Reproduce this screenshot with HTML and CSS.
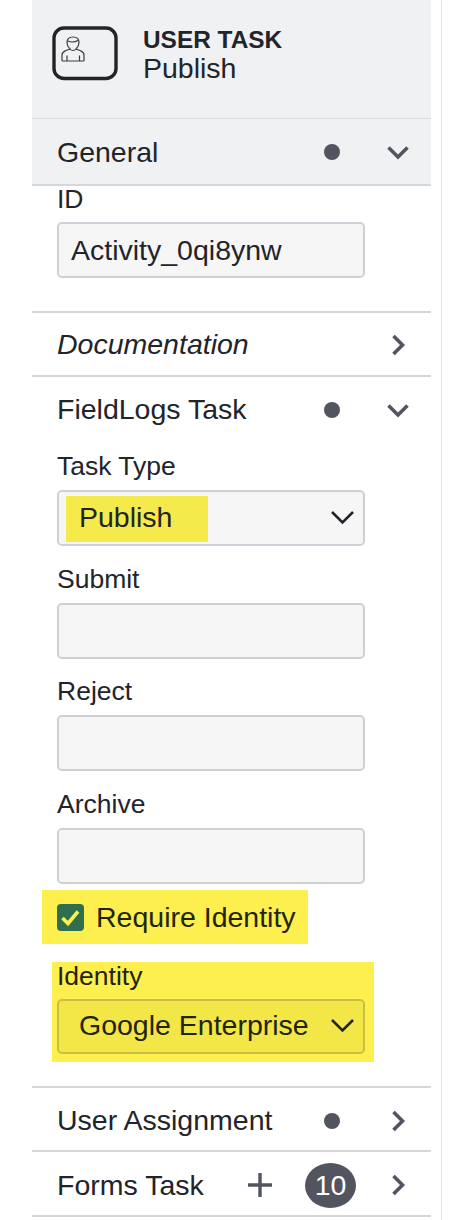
FILE: index.html
```html
<!DOCTYPE html>
<html lang="en">
<head>
    <meta charset="UTF-8">
    <meta name="viewport" content="width=device-width, initial-scale=1.0">
    <title>User Task properties</title>
    <link rel="stylesheet" href="styles.css">
</head>
<body>
    <div class="page">
        <div class="panel">
            <div class="panel-header">
                <svg class="task-icon" width="66" height="56" viewBox="0 0 66 56" fill="none">
                    <rect class="icon-frame" x="2" y="2" width="62" height="50.500" rx="10"/>
                    <path class="icon-person" d="M10 35H32M10 35V29C10 26 12 25.500 14 24.500L18 23C16 21 15 19 15 16.500C15 13 17.500 11 21 11C24.500 11 27 13 27 16.500C27 19 26 21 24 23L28 24.500C30 25.500 32 26 32 29V35M15 29.500V35M27.500 29.500V35M18 23C19.500 25 22.500 25 24 23M16 15C19 16.500 23 16 26 14.500"/>
                </svg>
                <div class="header-text">
                    <div class="task-kind">USER TASK</div>
                    <div class="task-name">Publish</div>
                </div>
            </div>

            <div class="group-head open-head">
                <span class="group-title">General</span>
                <span class="dot"></span>
                <svg class="arrow" width="26" height="26" viewBox="0 0 26 26"><path d="M3.500 8.500L13 18L22.500 8.500"/></svg>
            </div>
            <div class="group-body general-body">
                <label class="field-label id-label">ID</label>
                <div class="input">Activity_0qi8ynw</div>
            </div>

            <div class="group-head doc-head">
                <span class="group-title doc-title">Documentation</span>
                <svg class="arrow" width="26" height="26" viewBox="0 0 26 26"><path d="M8.500 4L17.500 13L8.500 22"/></svg>
            </div>

            <div class="group-head no-border">
                <span class="group-title">FieldLogs Task</span>
                <span class="dot"></span>
                <svg class="arrow" width="26" height="26" viewBox="0 0 26 26"><path d="M3.500 8.500L13 18L22.500 8.500"/></svg>
            </div>
            <div class="group-body fieldlogs-body">
                <label class="field-label">Task Type</label>
                <div class="input select">
                    <span class="marker"></span>
                    <span class="select-value">Publish</span>
                    <svg class="select-arrow" width="26" height="16" viewBox="0 0 26 16"><path d="M3 2L13.500 12.500L24 2"/></svg>
                </div>
                <label class="field-label next-label">Submit</label>
                <div class="input"></div>
                <label class="field-label next-label">Reject</label>
                <div class="input"></div>
                <label class="field-label next-label">Archive</label>
                <div class="input"></div>

                <div class="check-row">
                    <span class="checkbox">
                        <svg width="27" height="27" viewBox="0 0 27 27"><path d="M5.500 14L11 19.500L21 7.500"/></svg>
                    </span>
                    <span class="check-label">Require Identity</span>
                </div>

                <div class="identity-block">
                    <label class="field-label identity-label">Identity</label>
                    <div class="input select identity-select">
                        <span class="select-value">Google Enterprise</span>
                        <svg class="select-arrow" width="26" height="16" viewBox="0 0 26 16"><path d="M3 2L13.500 12.500L24 2"/></svg>
                    </div>
                </div>
            </div>

            <div class="group-head low-head user-head">
                <span class="group-title">User Assignment</span>
                <span class="dot"></span>
                <svg class="arrow" width="26" height="26" viewBox="0 0 26 26"><path d="M8.500 4L17.500 13L8.500 22"/></svg>
            </div>
            <div class="group-head low-head">
                <span class="group-title">Forms Task</span>
                <svg class="plus" width="26" height="26" viewBox="0 0 26 26"><path d="M13 1V25M1 13H25"/></svg>
                <span class="badge">10</span>
                <svg class="arrow" width="26" height="26" viewBox="0 0 26 26"><path d="M8.500 4L17.500 13L8.500 22"/></svg>
            </div>
        </div>
    </div>
</body>
</html>
```

FILE: styles.css
```css
body {
    margin: 0;
    background-color: #fff;
    font-family: 'Liberation Sans', Arial, sans-serif;
    color: #22242a;
    overflow: hidden;
}
.page {
    width: 409px;
    height: 1220px;
    margin-left: 32px;
    border-right: 1px solid #e4e5e9;
}
.panel {
    width: 399px;
}
.panel-header {
    height: 119px;
    box-sizing: border-box;
    background-color: #f0f1f3;
    border-bottom: 1px solid #dcdde2;
    display: flex;
    align-items: center;
    padding: 0 0 10px 20px;
}
.task-icon {
    flex-shrink: 0;
}
.icon-frame {
    stroke: #22242a;
    stroke-width: 3.4;
}
.icon-person {
    stroke: #3a3c44;
    stroke-width: 1.2;
}
.header-text {
    margin-left: 25px;
}
.task-kind {
    font-size: 24.4px;
    line-height: 29px;
    font-weight: bold;
}
.task-name {
    font-size: 28.5px;
    line-height: 29px;
}
.group-head {
    height: 65px;
    box-sizing: border-box;
    border-bottom: 2px solid #d6d7dc;
    display: flex;
    align-items: center;
    padding: 0 20px 0 25px;
}
.open-head {
    height: 67px;
    padding-top: 1px;
    background-color: #f0f1f3;
}
.doc-head {
    height: 64px;
    padding-top: 1px;
}
.no-border {
    height: 64px;
    padding-top: 1px;
    border-bottom: none;
}
.low-head {
    padding-top: 3px;
}
.user-head {
    height: 64px;
}
.group-title {
    flex: 1;
    font-size: 28.5px;
}
.doc-title {
    font-style: italic;
}
.dot {
    width: 16px;
    height: 16px;
    border-radius: 50%;
    background-color: #52555f;
    margin-right: 45px;
}
.arrow path, .plus path {
    fill: none;
    stroke: #52555f;
    stroke-width: 3.6;
}
.plus {
    margin-right: 32px;
}
.plus path {
    stroke-width: 3.4;
}
.badge {
    width: 51px;
    height: 45px;
    border-radius: 50%;
    background-color: #52555f;
    color: #fff;
    font-size: 28.5px;
    line-height: 45px;
    text-align: center;
    margin-right: 29px;
}
.group-body {
    padding: 0 66px 0 25px;
    border-bottom: 2px solid #d6d7dc;
}
.general-body {
    display: flow-root;
    height: 127px;
    box-sizing: border-box;
}
.fieldlogs-body {
    padding-top: 10px;
    padding-bottom: 24.5px;
}
.field-label {
    display: block;
    font-size: 26.5px;
    line-height: 30px;
    margin-bottom: 9px;
}
.id-label {
    margin-top: -2px;
    margin-bottom: 8px;
}
.next-label {
    margin-top: 17.5px;
}
.input {
    height: 56px;
    box-sizing: border-box;
    border: 2px solid #cfd0d7;
    border-radius: 5px;
    background-color: #f6f6f7;
    font-size: 28.5px;
    line-height: 52px;
    padding-left: 12px;
}
.select {
    position: relative;
    display: flex;
    align-items: center;
    justify-content: space-between;
    padding: 0 8px 0 20px;
}
.select-value {
    position: relative;
    margin-top: -2px;
}
.marker {
    position: absolute;
    left: 7px;
    top: 4px;
    width: 142px;
    height: 46px;
    background-color: #f5ea4b;
}
.select-arrow path {
    fill: none;
    stroke: #22242a;
    stroke-width: 2.6;
}
.check-row {
    display: flex;
    align-items: center;
    height: 54px;
    width: 266px;
    margin: 6px 0 0 -15px;
    padding: 2px 0 0 15px;
    box-sizing: border-box;
    background-color: #fdf04e;
}
.checkbox {
    width: 27px;
    height: 27px;
    border-radius: 4px;
    background-color: #2f6f4e;
    flex-shrink: 0;
}
.checkbox svg {
    display: block;
}
.checkbox path {
    fill: none;
    stroke: #fdf04e;
    stroke-width: 3.6;
}
.check-label {
    font-size: 28.5px;
    margin-left: 12px;
    color: #22240f;
}
.identity-block {
    width: 322px;
    height: 100px;
    margin: 18px 0 0 -5px;
    padding: 0 9px 0 5px;
    box-sizing: border-box;
    background-color: #fdf04e;
}
.identity-label {
    line-height: 28px;
    margin-bottom: 9px;
    color: #22240f;
}
.identity-select {
    height: 55px;
    background-color: #f3e748;
    border-color: #c9bf45;
    color: #22240f;
}
```
